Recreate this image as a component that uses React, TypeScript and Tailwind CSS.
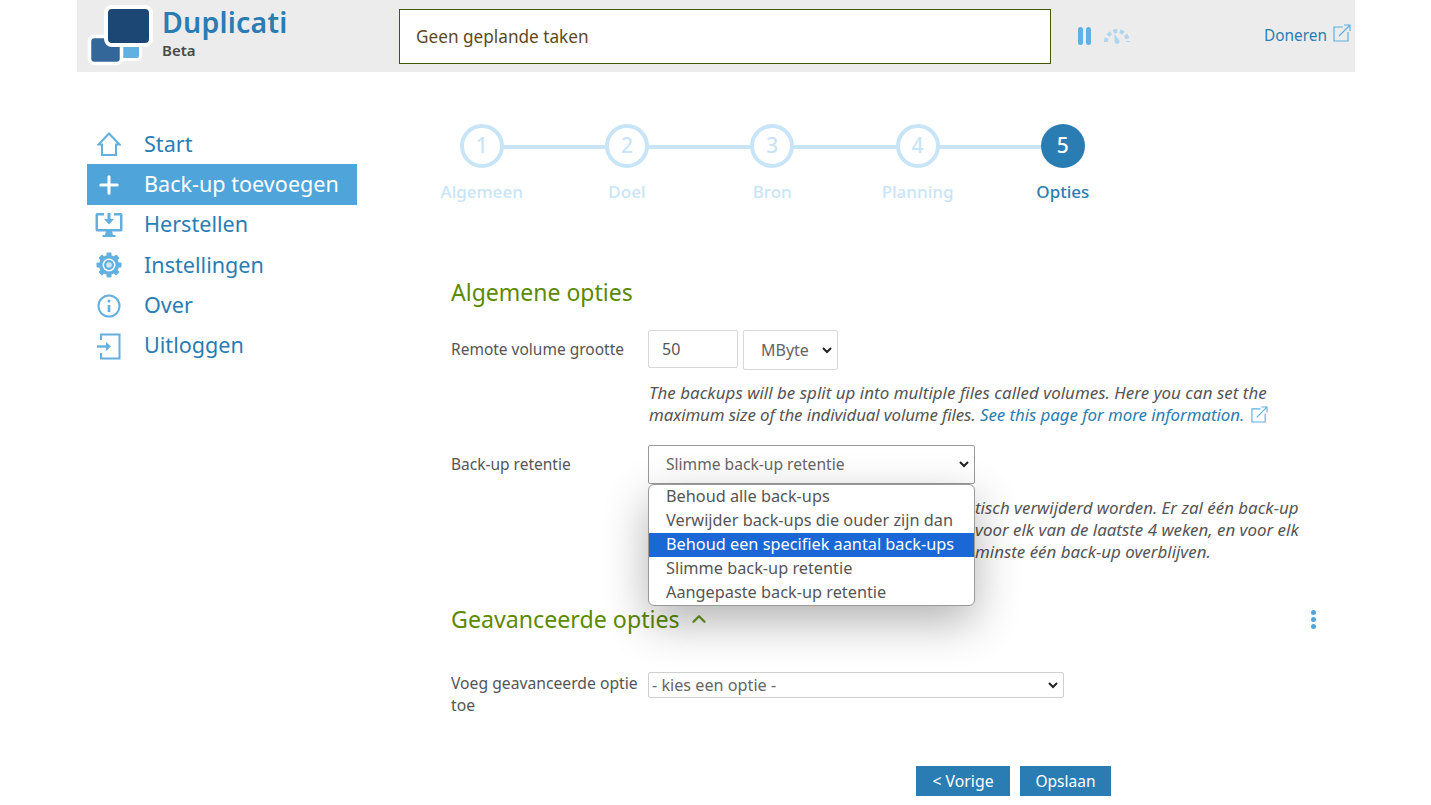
import React from 'react';
import { ChevronUp, Plus } from 'lucide-react';

const ExternalIcon: React.FC<{ className?: string }> = ({ className }) => (
  <svg viewBox="0 0 18 18" className={className} fill="none" stroke="#5fb0e0" strokeWidth="1.2">
    <path d="M10 3H1v14h14V8" />
    <path d="M6 12 17 1M11 1h6v6" />
  </svg>
);

const Logo: React.FC = () => (
  <svg width="66" height="66" viewBox="0 0 66 66" className="shrink-0">
    <rect x="30" y="36" width="23.500" height="19.500" rx="4" fill="#62b0e0" stroke="#fff" strokeWidth="3" />
    <rect x="2.500" y="32.500" width="32" height="27" rx="5" fill="#336699" stroke="#fff" strokeWidth="3.500" />
    <rect x="19" y="3" width="45" height="38" rx="6" fill="#1c4674" stroke="#fff" strokeWidth="4" />
  </svg>
);

const Gauge: React.FC = () => (
  <svg width="28" height="16" viewBox="0 0 28 16" fill="none">
    <path d="M3 14A11 11 0 0 1 25 14" stroke="#b0d6ee" strokeWidth="4" strokeDasharray="4 2.700" />
    <path d="M11.500 6l4.500 6a2.500 2.500 0 1 1-4.500 1.500z" fill="#b0d6ee" />
  </svg>
);

const menu = [
  {
    label: 'Start',
    icon: (
      <svg width="24" height="24" viewBox="0 0 24 24" fill="none" stroke="#62b0e0" strokeWidth="2">
        <path d="M1.500 12.500 12 1.500l10.500 11H19V23H5V12.500z" />
      </svg>
    ),
  },
  { label: 'Back-up toevoegen', active: true, icon: <Plus size={28} strokeWidth={2.6} color="#fff" /> },
  {
    label: 'Herstellen',
    icon: (
      <svg width="28" height="26" viewBox="0 0 28 26" fill="#62b0e0">
        <path d="M2 1h7v2.500H3V17h22V3.500h-6V1h7a2 2 0 0 1 1.500 1.500V18a2 2 0 0 1-1.500 1.500H2A2 2 0 0 1 .500 18V2.500A2 2 0 0 1 2 1z" />
        <path d="M12.500 1h3v6H19l-5 5.500L9 7h3.500z" />
        <path d="M11 19h6l1 4h2.500v2h-13v-2H10z" />
      </svg>
    ),
  },
  {
    label: 'Instellingen',
    icon: (
      <svg width="26" height="26" viewBox="0 0 26 26">
        <g fill="#62b0e0">
          <circle cx="13" cy="13" r="10" />
          {[0, 45, 90, 135, 180, 225, 270, 315].map((a) => (
            <rect key={a} x="10.500" y="0.500" width="5" height="5" rx="1" transform={`rotate(${a} 13 13)`} />
          ))}
        </g>
        <circle cx="13" cy="13" r="6.500" fill="#fff" />
        <circle cx="13" cy="13" r="5" fill="#62b0e0" />
        <circle cx="13" cy="13" r="2.800" fill="#cfe6f5" />
      </svg>
    ),
  },
  {
    label: 'Over',
    icon: (
      <svg width="24" height="24" viewBox="0 0 24 24" fill="none" stroke="#62b0e0" strokeWidth="2">
        <circle cx="12" cy="12" r="10.500" />
        <path d="M12 11v7" strokeWidth="2.600" />
        <circle cx="12" cy="7" r="1.500" fill="#62b0e0" stroke="none" />
      </svg>
    ),
  },
  {
    label: 'Uitloggen',
    icon: (
      <svg width="26" height="28" viewBox="0 0 26 28" fill="none" stroke="#62b0e0" strokeWidth="2">
        <path d="M5 8V2.500h18.500V26.500H5V21" />
        <path d="M1 14.500h12" strokeWidth="2.400" />
        <path d="M10 10l5 4.500-5 4.500z" fill="#62b0e0" stroke="none" />
      </svg>
    ),
  },
];

const steps = ['Algemeen', 'Doel', 'Bron', 'Planning', 'Opties'];

const options = [
  'Behoud alle back-ups',
  'Verwijder back-ups die ouder zijn dan',
  'Behoud een specifiek aantal back-ups',
  'Slimme back-up retentie',
  'Aangepaste back-up retentie',
];

const Caret: React.FC = () => (
  <svg width="10" height="7" viewBox="0 0 10 7" fill="none" stroke="#222" strokeWidth="2">
    <path d="M1 1l4 4 4-4" />
  </svg>
);

const App: React.FC = () => {
  return (
    <div className="h-[805px] overflow-hidden bg-white font-['Noto_Sans',sans-serif] text-[#555]">
      <div className="mx-[77px] w-[1278px]">
        {/* Header */}
        <div className="flex h-[72px] items-center bg-[#ececec]">
          <div className="ml-[10px] mt-[2px] w-[66px]"><Logo /></div>
          <div className="-mt-[5px] ml-[9px] w-[237px]">
            <div className="text-[28.500px] leading-[32px] font-semibold tracking-[0.2px] text-[#2a7db3]">Duplicati</div>
            <div className="text-[15px] leading-[24px] font-semibold text-[#4a4a4a]">Beta</div>
          </div>
          <div className="flex h-[55px] w-[652px] items-center border border-[#3f5a00] bg-white px-4 pt-[2px] text-[17.200px] text-[#5b4a1e]">
            Geen geplande taken
          </div>
          <div className="ml-[27px] flex w-[13px] gap-[3px]">
            <div className="h-[18px] w-[5px] rounded-full bg-[#62b0e0]" />
            <div className="h-[18px] w-[5px] rounded-full bg-[#62b0e0]" />
          </div>
          <div className="ml-[12px]"><Gauge /></div>
          <div className="ml-[133px] flex items-center gap-[6px] text-[15.400px] text-[#2a7db3]">
            Doneren
            <ExternalIcon className="mb-[5px] h-[18px] w-[18px]" />
          </div>
        </div>

        <div className="flex">
          {/* Sidebar */}
          <div className="ml-[10px] mt-[52px] w-[270px] shrink-0">
            {menu.map((item) => (
              <div
                key={item.label}
                className={`flex h-[40.400px] items-center text-[21.600px] ${item.active ? 'bg-[#4fa5d9] text-white' : 'text-[#2a7db3]'}`}
              >
                <div className="mr-[13px] flex w-[44px] items-center justify-center">{item.icon}</div>
                <span className="pb-[1px]">{item.label}</span>
              </div>
            ))}
          </div>

          {/* Main */}
          <div className="ml-[94px] flex-1">
            {/* Steps */}
            <div className="relative mt-[52px] -ml-[42px] flex w-[727px]">
              <div className="absolute top-[21px] left-[73px] h-1 w-[581px] bg-[#c8e5f7]" />
              {steps.map((step, i) => (
                <div key={step} className="relative flex w-[145.300px] shrink-0 flex-col items-center">
                  <div
                    className={`flex h-[44px] w-[44px] items-center justify-center rounded-full text-[21px] font-medium ${
                      i === 4 ? 'bg-[#2a7db3] text-white' : 'border-4 border-[#c8e5f7] bg-white text-[#c8e5f7]'
                    }`}
                  >
                    {i + 1}
                  </div>
                  <div className={`mt-[12px] text-[17px] leading-[24px] font-medium ${i === 4 ? 'text-[#2a7db3]' : 'text-[#c8e5f7]'}`}>
                    {step}
                  </div>
                </div>
              ))}
            </div>

            <div className="mt-[72px] text-[23px] leading-[32px] text-[#5b8a00]">Algemene opties</div>

            {/* Remote volume */}
            <div className="mt-[22px] flex">
              <div className="w-[197px] pt-[7px] text-[15.500px] leading-[24px]">Remote volume grootte</div>
              <div>
                <div className="flex gap-[5px]">
                  <div className="flex h-[38px] w-[90px] items-center rounded-[2px] border border-[#d8d8d8] px-[13px] text-[16px]">50</div>
                  <div className="flex h-[40px] w-[95px] items-center justify-between rounded-[2px] border border-[#d8d8d8] pr-[5px] pl-[17px] text-[16px] text-[#666]">
                    MByte
                    <Caret />
                  </div>
                </div>
                <div className="mt-[12px] w-[650px] pl-[1px] text-[16.900px] leading-[22px] text-[#555] italic">
                  <span className="tracking-[0.04px]">The backups will be split up into multiple files called volumes. Here you can set the</span>{' '}
                  <span className="tracking-[-0.12px]">maximum size of the individual volume files.</span>{' '}
                  <span className="tracking-[-0.06px] text-[#2a7db3]">See this page for more information.</span>
                  <ExternalIcon className="mb-[3px] ml-[7px] inline h-[17px] w-[17px]" />
                </div>
              </div>
            </div>

            {/* Retention */}
            <div className="relative mt-[19px] flex">
              <div className="w-[197px] pt-[7px] text-[15.500px] leading-[24px]">Back-up retentie</div>
              <div>
                <div className="flex h-[39px] w-[327px] items-center justify-between rounded-[2px] border border-[#9a9a9a] pr-[5px] pl-[17px] text-[15.600px] text-[#666]">
                  Slimme back-up retentie
                  <Caret />
                </div>
                <div className="mt-[13px] w-[655px] pl-[327px] text-[16.900px] leading-[22px] text-[#555] italic">
                  <div className="whitespace-nowrap">tisch verwijderd worden. Er zal één back-up</div>
                  <div className="whitespace-nowrap">voor elk van de laatste 4 weken, en voor elk</div>
                  <div className="whitespace-nowrap">minste één back-up overblijven.</div>
                </div>
              </div>
              {/* open select list */}
              <div className="absolute top-[39px] left-[197px] z-10 w-[327px] overflow-hidden rounded-[6px] border border-[#9a9a9a] bg-white text-[16.300px] leading-[22px] text-[#555] shadow-[0_16px_45px_rgba(0,0,0,0.3)]">
                {options.map((o, i) => (
                  <div key={o} className={`h-[24px] pl-[17px] whitespace-nowrap ${i === 2 ? 'bg-[#1a67d6] text-white' : ''}`}>
                    {o}
                  </div>
                ))}
              </div>
            </div>

            {/* Advanced */}
            <div className="mt-[40px] flex items-center text-[23.200px] leading-[32px] text-[#5b8a00]">
              Geavanceerde opties
              <ChevronUp size={22} strokeWidth={2.6} color="#6a9a20" className="ml-[8px]" />
              <div className="ml-auto mr-[39px] flex flex-col gap-[2px]">
                <div className="h-[5px] w-[5px] rounded-full bg-[#4fa5d9]" />
                <div className="h-[5px] w-[5px] rounded-full bg-[#4fa5d9]" />
                <div className="h-[5px] w-[5px] rounded-full bg-[#4fa5d9]" />
              </div>
            </div>

            <div className="mt-[37px] flex">
              <div className="w-[197px] pr-[4px] text-[15.700px] leading-[22px]">Voeg geavanceerde optie toe</div>
              <div className="flex h-[26px] w-[416px] items-center justify-between rounded-[2px] border border-[#d0d0d0] pr-[5px] pl-[3px] text-[16.200px] text-[#666]">
                - kies een optie -
                <Caret />
              </div>
            </div>

            <div className="mt-[50px] ml-[465px] flex gap-[10px]">
              <div className="flex h-[30px] w-[94px] items-center justify-center bg-[#2a7db3] text-[15.800px] text-white">&lt; Vorige</div>
              <div className="flex h-[30px] w-[91px] items-center justify-center bg-[#2a7db3] text-[15.500px] text-white">Opslaan</div>
            </div>
          </div>
        </div>
      </div>
    </div>
  );
};

export default App;
